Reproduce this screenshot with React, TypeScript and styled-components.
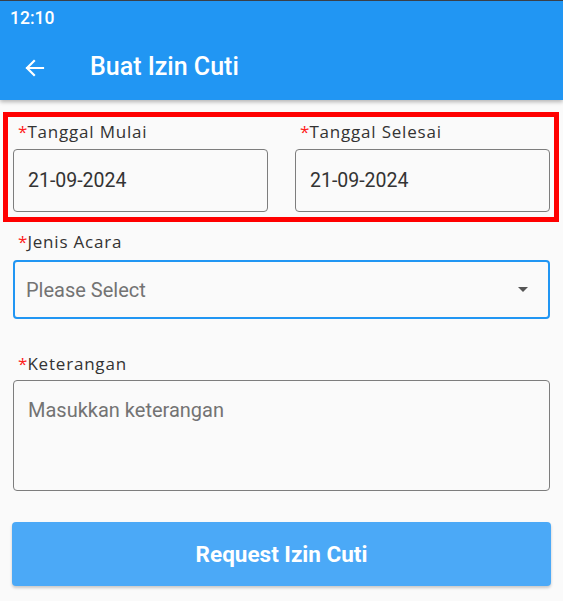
import React from "react";
import styled, { createGlobalStyle } from "styled-components";

const Global = createGlobalStyle`
  html, body { margin: 0; padding: 0; background: #fafafa; }
  body { font-family: Roboto, "Liberation Sans", sans-serif; }
  * { box-sizing: border-box; }
`;

const Page = styled.div`
  width: 563px;
  height: 601px;
  background: #fafafa;
  overflow: hidden;
`;

const Header = styled.header`
  background: #2196f3;
  box-shadow: 0 2px 4px rgba(0, 0, 0, 0.28);
  border-top: 1px solid #3a3f47;
  position: relative;
  z-index: 1;
`;

const StatusBar = styled.div`
  height: 34px;
  display: flex;
  align-items: center;
  padding-left: 10px;
  color: #fff;
  font-family: Roboto, sans-serif;
  font-size: 17.5px;
  font-weight: 500;
`;

const AppBar = styled.div`
  height: 65px;
  display: flex;
  align-items: center;
  padding-left: 22px;
  gap: 42px;
`;

const BackButton = styled.div`
  width: 26px;
  height: 26px;
  display: flex;
  align-items: center;
  justify-content: center;
`;

const Title = styled.h1`
  margin: 0 0 2px;
  color: #fff;
  font-family: Roboto, sans-serif;
  font-size: 25px;
  font-weight: 500;
`;

const Content = styled.div`
  padding: 12px 0 0;
`;

const Highlight = styled.div`
  margin: 0 4px 0 3px;
  border: 5px solid #ff0000;
  padding: 5px 4px 5px 5px;
  display: grid;
  grid-template-columns: 255px 255px;
  column-gap: 27px;
`;

const Field = styled.div`
  display: flex;
  flex-direction: column;
`;

const Label = styled.div<{ $gap: number }>`
  font-family: "Open Sans", Lato, sans-serif;
  font-size: 17px;
  line-height: 20px;
  color: #333;
  padding-left: 5px;
  margin-bottom: ${(p) => p.$gap}px;
  letter-spacing: 0.8px;
`;

const Star = styled.span`
  color: #ff1a1a;
  letter-spacing: 0;
`;

const Box = styled.div<{ $h: number; $focus?: boolean; $top?: boolean }>`
  height: ${(p) => p.$h}px;
  border: ${(p) => (p.$focus ? "2px solid #2196f3" : "1px solid #7d7d7d")};
  border-radius: 4px;
  display: flex;
  align-items: ${(p) => (p.$top ? "flex-start" : "center")};
  padding: ${(p) => (p.$top ? "17px 14px" : p.$focus ? "0 20px 0 11px" : "0 14px")};
  font-family: Roboto, sans-serif;
  font-size: ${(p) => (p.$focus || p.$top ? 20 : 19.5)}px;
  color: #333;
`;

const Placeholder = styled.span`
  color: #737373;
  flex: 1;
`;

const Caret = styled.div`
  width: 0;
  height: 0;
  border-left: 5px solid transparent;
  border-right: 5px solid transparent;
  border-top: 5px solid #555;
`;

const Section = styled.div<{ $mt: number }>`
  margin: ${(p) => p.$mt}px 13px 0;
`;

const Button = styled.button`
  display: block;
  width: 539px;
  height: 64px;
  margin: 31px 0 0 12px;
  border: none;
  border-radius: 4px;
  background: #4ba9f7;
  box-shadow: 0 2px 3px rgba(0, 0, 0, 0.2);
  color: #fff;
  font-family: Roboto, sans-serif;
  font-size: 22.5px;
  font-weight: 700;
`;

export default function App() {
  return (
    <Page>
      <Global />
      <Header>
        <StatusBar>12:10</StatusBar>
        <AppBar>
          <BackButton>
            <svg width="24" height="24" viewBox="0 0 24 24">
              <path
                d="M20 12H4M11 5l-7 7 7 7"
                fill="none"
                stroke="#fff"
                strokeWidth="2.2"
                strokeLinecap="square"
              />
            </svg>
          </BackButton>
          <Title>Buat Izin Cuti</Title>
        </AppBar>
      </Header>
      <Content>
        <Highlight>
          <Field>
            <Label $gap={7}>
              <Star>*</Star>Tanggal Mulai
            </Label>
            <Box $h={63}>21-09-2024</Box>
          </Field>
          <Field>
            <Label $gap={7}>
              <Star>*</Star>Tanggal Selesai
            </Label>
            <Box $h={63}>21-09-2024</Box>
          </Field>
        </Highlight>
        <Section $mt={10}>
          <Label $gap={8}>
            <Star>*</Star>Jenis Acara
          </Label>
          <Box $h={59} $focus>
            <Placeholder>Please Select</Placeholder>
            <Caret />
          </Box>
        </Section>
        <Section $mt={35}>
          <Label $gap={6}>
            <Star>*</Star>Keterangan
          </Label>
          <Box $h={111} $top>
            <Placeholder>Masukkan keterangan</Placeholder>
          </Box>
        </Section>
        <Button>Request Izin Cuti</Button>
      </Content>
    </Page>
  );
}
